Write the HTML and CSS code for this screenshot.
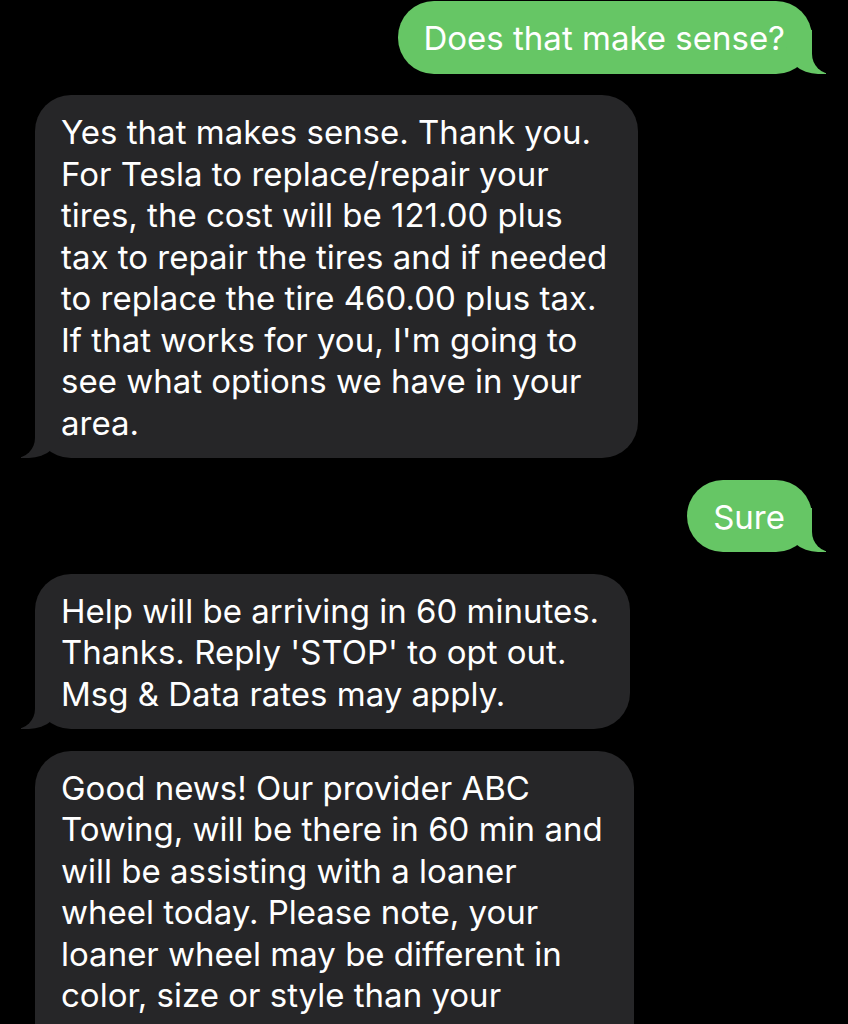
FILE: index.html
```html
<!DOCTYPE html>
<html lang="en">
<head>
<meta charset="utf-8">
<title>Messages</title>
<link rel="stylesheet" href="styles.css">
</head>
<body>
<main class="thread">
  <div class="bubble sent">Does that make sense?</div>
  <div class="bubble received">Yes that makes sense. Thank you.<br>For Tesla to replace/repair your<br>tires, the cost will be 121.00 plus<br>tax to repair the tires and if needed<br>to replace the tire 460.00 plus tax.<br>If that works for you, I'm going to<br>see what options we have in your<br>area.</div>
  <div class="bubble sent">Sure</div>
  <div class="bubble received">Help will be arriving in 60 minutes.<br>Thanks. Reply 'STOP' to opt out.<br>Msg &amp; Data rates may apply.</div>
  <div class="bubble received">Good news! Our provider ABC<br>Towing, will be there in 60 min and<br>will be assisting with a loaner<br>wheel today. Please note, your<br>loaner wheel may be different in<br>color, size or style than your<br>original wheel.</div>
</main>
</body>
</html>
```
FILE: styles.css
```css
html, body {
  margin: 0;
  padding: 0;
  background: #000;
  height: 1024px;
  overflow: hidden;
}

.thread {
  display: flex;
  flex-direction: column;
  gap: 21.5px;
  padding: 1px 36px 0 35px;
  font-family: Inter, "Noto Sans", sans-serif;
  font-size: 33px;
  line-height: 41.5px;
  color: #fff;
}

.bubble {
  position: relative;
  padding: 17px 27px 14px 26px;
  border-radius: 36px;
  white-space: nowrap;
}

.sent {
  align-self: flex-end;
  background: #66c665;
}

.received {
  align-self: flex-start;
  background: #262628;
  padding-right: 31px;
}

.bubble::before,
.bubble::after {
  content: "";
  position: absolute;
  bottom: 0;
  height: 44px;
}

.sent::before {
  right: -14px;
  width: 40px;
  background: #66c665;
  border-bottom-left-radius: 32px 28px;
}

.sent::after {
  right: -52px;
  width: 52px;
  background: #000;
  border-bottom-left-radius: 20px;
}

.received::before {
  left: -14px;
  width: 40px;
  background: #262628;
  border-bottom-right-radius: 32px 28px;
}

.received::after {
  left: -52px;
  width: 52px;
  background: #000;
  border-bottom-right-radius: 20px;
}
```
